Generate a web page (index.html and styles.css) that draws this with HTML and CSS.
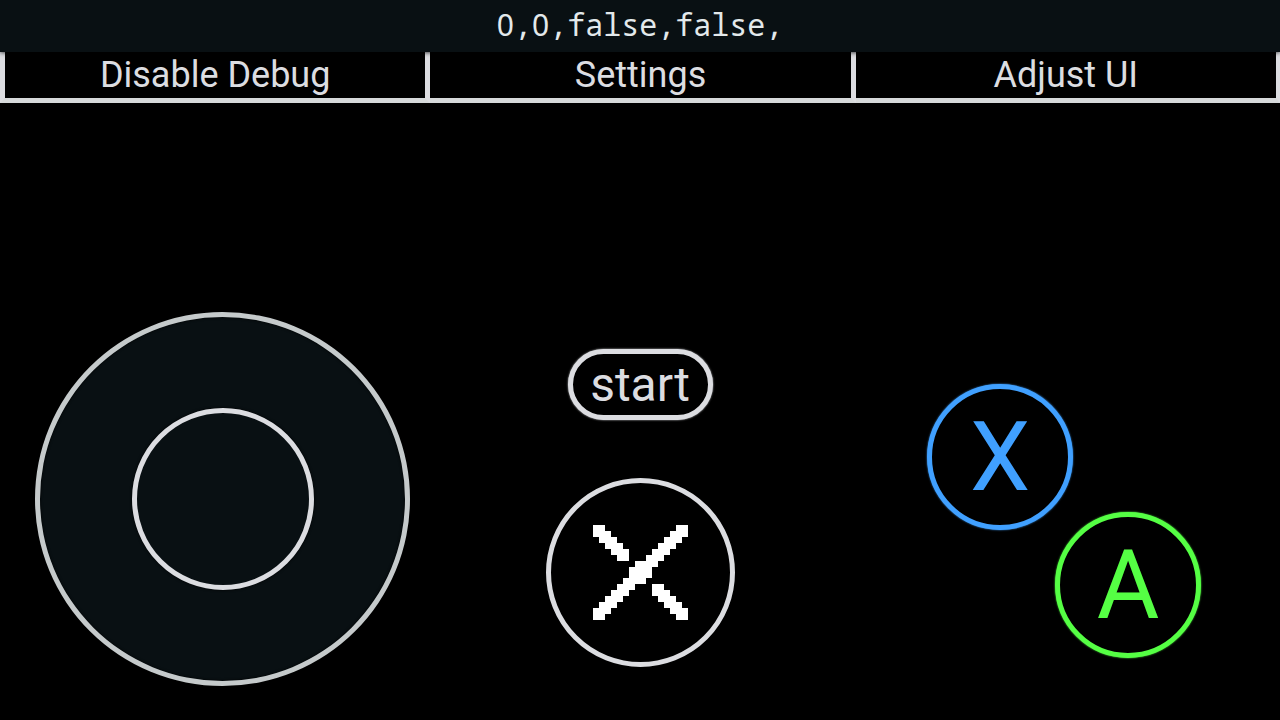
FILE: index.html
```html
<!DOCTYPE html>
<html lang="en">
<head>
<meta charset="utf-8">
<meta name="viewport" content="width=device-width, initial-scale=1">
<title>Controller</title>
<link rel="stylesheet" href="styles.css">
</head>
<body>
<header class="debug"><span class="digit">0</span>,<span class="digit">0</span>,false,false,</header>
<nav class="menu">
<button class="menu-item" type="button">Disable Debug</button>
<button class="menu-item" type="button">Settings</button>
<button class="menu-item" type="button">Adjust UI</button>
</nav>
<main class="pad">
<div class="stick"><div class="knob"></div></div>
<div class="center">
<button class="start" type="button">start</button>
<button class="round cross" type="button" aria-label="Cross">
<svg class="pixels" viewBox="0 0 16 16" shape-rendering="crispEdges" aria-hidden="true">
<path fill="#fff" d="M0 0h2v1h-2zM14 0h2v1h-2zM0 1h3v1h-3zM13 1h3v1h-3zM1 2h3v1h-3zM12 2h3v1h-3zM2 3h3v1h-3zM11 3h3v1h-3zM3 4h3v1h-3zM10 4h3v1h-3zM4 5h2v1h-2zM9 5h3v1h-3zM7 6h4v1h-4zM6 7h4v2h-4zM5 9h4v1h-4zM4 10h3v1h-3zM10 10h2v1h-2zM3 11h3v1h-3zM10 11h3v1h-3zM2 12h3v1h-3zM11 12h3v1h-3zM1 13h3v1h-3zM12 13h3v1h-3zM0 14h3v1h-3zM13 14h3v1h-3zM0 15h2v1h-2zM14 15h2v1h-2z"/>
</svg>
</button>
</div>
<div class="actions">
<button class="round action action-x" type="button">X</button>
<button class="round action action-a" type="button">A</button>
</div>
</main>
</body>
</html>
```

FILE: styles.css
```css
* { box-sizing: border-box; }

body {
  margin: 0;
  min-height: 100vh;
  display: flex;
  flex-direction: column;
  background: #000;
  color: #dcdde1;
  font-family: Roboto, sans-serif;
}

button {
  margin: 0;
  padding: 0;
  background: #000;
  color: inherit;
  font-family: inherit;
  cursor: pointer;
}

.debug {
  position: relative;
  padding: 5px 0 7px;
  background: #091013;
  box-shadow: 0 0 5px #000;
  color: #e3e9eb;
  font-family: "Droid Sans Mono", "Noto Sans Mono", "DejaVu Sans Mono", monospace;
  font-size: 30px;
  line-height: 40px;
  text-align: center;
}

.digit {
  font-family: "Noto Sans", sans-serif;
  line-height: 1;
}

.menu { display: flex; }

.menu-item {
  flex: 1;
  box-sizing: content-box;
  border: solid #dcdde1;
  border-width: 0 5px 5px 0;
  border-bottom-color: #d6d9da;
  font-size: 36px;
  line-height: 46px;
}

.menu-item:first-child { border-left-width: 5px; }
.menu-item:last-child { border-right-width: 4px; }

.pad {
  flex: 1;
  display: grid;
  grid-template-columns: 1fr auto 1fr;
  align-items: end;
  padding: 0 79px 34px 35px;
}

.stick {
  display: grid;
  place-items: center;
  width: 375px;
  height: 374px;
  border: 5px solid #c5cacb;
  border-radius: 50%;
  background: #091013;
  box-shadow: inset 0 0 3px #000;
}

.knob {
  width: 182px;
  height: 182px;
  border: 5px solid #dcdde1;
  border-radius: 50%;
  box-shadow: 0 0 3px #000;
}

.center {
  display: flex;
  flex-direction: column;
  align-items: center;
  gap: 58px;
  margin: 0 0 19px 44px;
}

.start {
  width: 145px;
  height: 71px;
  border: 5px solid #dcdde1;
  border-radius: 36px;
  box-shadow: 0 0 2px #dcdde1;
  font-size: 48px;
  line-height: 61px;
}

.round {
  display: grid;
  place-items: center;
  border: 5px solid;
  border-radius: 50%;
}

.cross {
  width: 189px;
  height: 189px;
}

.pixels {
  width: 95px;
  height: 95px;
}

.actions {
  justify-self: end;
  display: grid;
  grid-template-columns: 128px 146px;
  grid-template-rows: 128px 146px;
  margin-bottom: 28px;
}

.action {
  width: 146px;
  height: 146px;
  box-shadow: 0 0 2px;
  font-size: 96px;
  line-height: 136px;
}

.action-x { color: #40a0ff; }

.action-a {
  grid-area: 2 / 2;
  color: #55ff44;
}
```
